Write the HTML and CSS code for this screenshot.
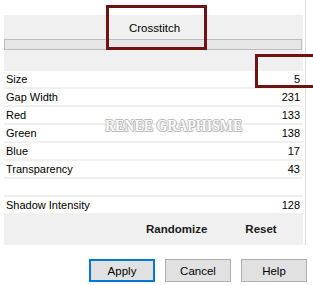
FILE: index.html
```html
<!DOCTYPE html>
<html>
<head>
<meta charset="utf-8">
<link rel="stylesheet" href="styles.css">
</head>
<body>
<div class="frame">
  <div class="panel">
    <div class="header"></div>
    <div class="bar"></div>
    <div class="rows">
      <div class="row"><span>Size</span><span>5</span></div>
      <div class="row"><span>Gap Width</span><span>231</span></div>
      <div class="row"><span>Red</span><span>133</span></div>
      <div class="row"><span>Green</span><span>138</span></div>
      <div class="row"><span>Blue</span><span>17</span></div>
      <div class="row"><span>Transparency</span><span>43</span></div>
      <div class="row"><span></span><span></span></div>
      <div class="row"><span>Shadow Intensity</span><span>128</span></div>
    </div>
    <div class="actions">
      <span class="act rand">Randomize</span>
      <span class="act reset">Reset</span>
    </div>
  </div>
  <div class="edge"></div>
</div>
<div class="buttons">
  <div class="btn primary">Apply</div>
  <div class="btn">Cancel</div>
  <div class="btn">Help</div>
</div>
<div class="mark mark-title">Crosstitch</div>
<div class="mark mark-size"></div>
<div class="watermark">RENEE GRAPHISME</div>
</body>
</html>
```
FILE: styles.css
```css
html, body {
  margin: 0;
  padding: 0;
  background: #ffffff;
  width: 313px;
  height: 285px;
  overflow: hidden;
  font-family: "Liberation Sans", Arial, sans-serif;
  font-size: 11px;
  color: #000;
}
.frame {
  display: flex;
  height: 245px;
}
.panel {
  margin-left: 4px;
  margin-top: 15px;
  width: 299px;
  height: 230px;
  background: #f0f0f0;
  display: flex;
  flex-direction: column;
}
.header {
  height: 24px;
}
.bar {
  height: 9px;
  background: #e6e6e6;
  border: 1px solid #bcbcbc;
  margin: 0 1px 0 0;
}
.rows {
  margin-top: 21px;
  display: grid;
  grid-auto-rows: 16px;
  row-gap: 2px;
}
.row {
  background: #ffffff;
  display: flex;
  justify-content: space-between;
  align-items: center;
  padding: 0 3px 0 2px;
  line-height: 16px;
}
.actions {
  flex: 1;
  display: flex;
  align-items: center;
  font-weight: bold;
  font-size: 11.5px;
  color: #1a1a1a;
}
.rand {
  margin-left: 142px;
}
.reset {
  margin-left: 38px;
}
.edge {
  margin-left: 2px;
  width: 1px;
  background: #dcdcdc;
}
.buttons {
  display: flex;
  gap: 10px;
  margin: 14px 0 0 89px;
}
.btn {
  width: 64px;
  height: 21px;
  border: 1px solid #adadad;
  background: #e1e1e1;
  display: flex;
  align-items: center;
  justify-content: center;
  font-size: 11.5px;
}
.btn.primary {
  border: 2px solid #0078d7;
  width: 62px;
  height: 19px;
}
.mark {
  position: absolute;
  border: 3px solid #6e1212;
  box-sizing: border-box;
}
.mark-title {
  left: 106px;
  top: 5px;
  width: 101px;
  height: 45px;
  display: flex;
  align-items: center;
  justify-content: center;
  font-size: 11.5px;
  padding-right: 4px;
}
.mark-size {
  left: 255px;
  top: 54px;
  width: 70px;
  height: 34px;
}
.watermark {
  position: absolute;
  left: 105px;
  top: 118px;
  font-family: "Liberation Serif", "Times New Roman", serif;
  font-weight: bold;
  font-size: 16px;
  line-height: 16px;
  white-space: nowrap;
  transform: scaleX(0.87);
  transform-origin: left top;
  color: #fafafa;
  text-shadow: 1px 0 0 #b4b4b4, -1px 0 0 #b4b4b4, 0 1px 0 #b4b4b4, 0 -1px 0 #b4b4b4, 1px 1px 0 #c8c8c8;
  opacity: 0.9;
}
```
